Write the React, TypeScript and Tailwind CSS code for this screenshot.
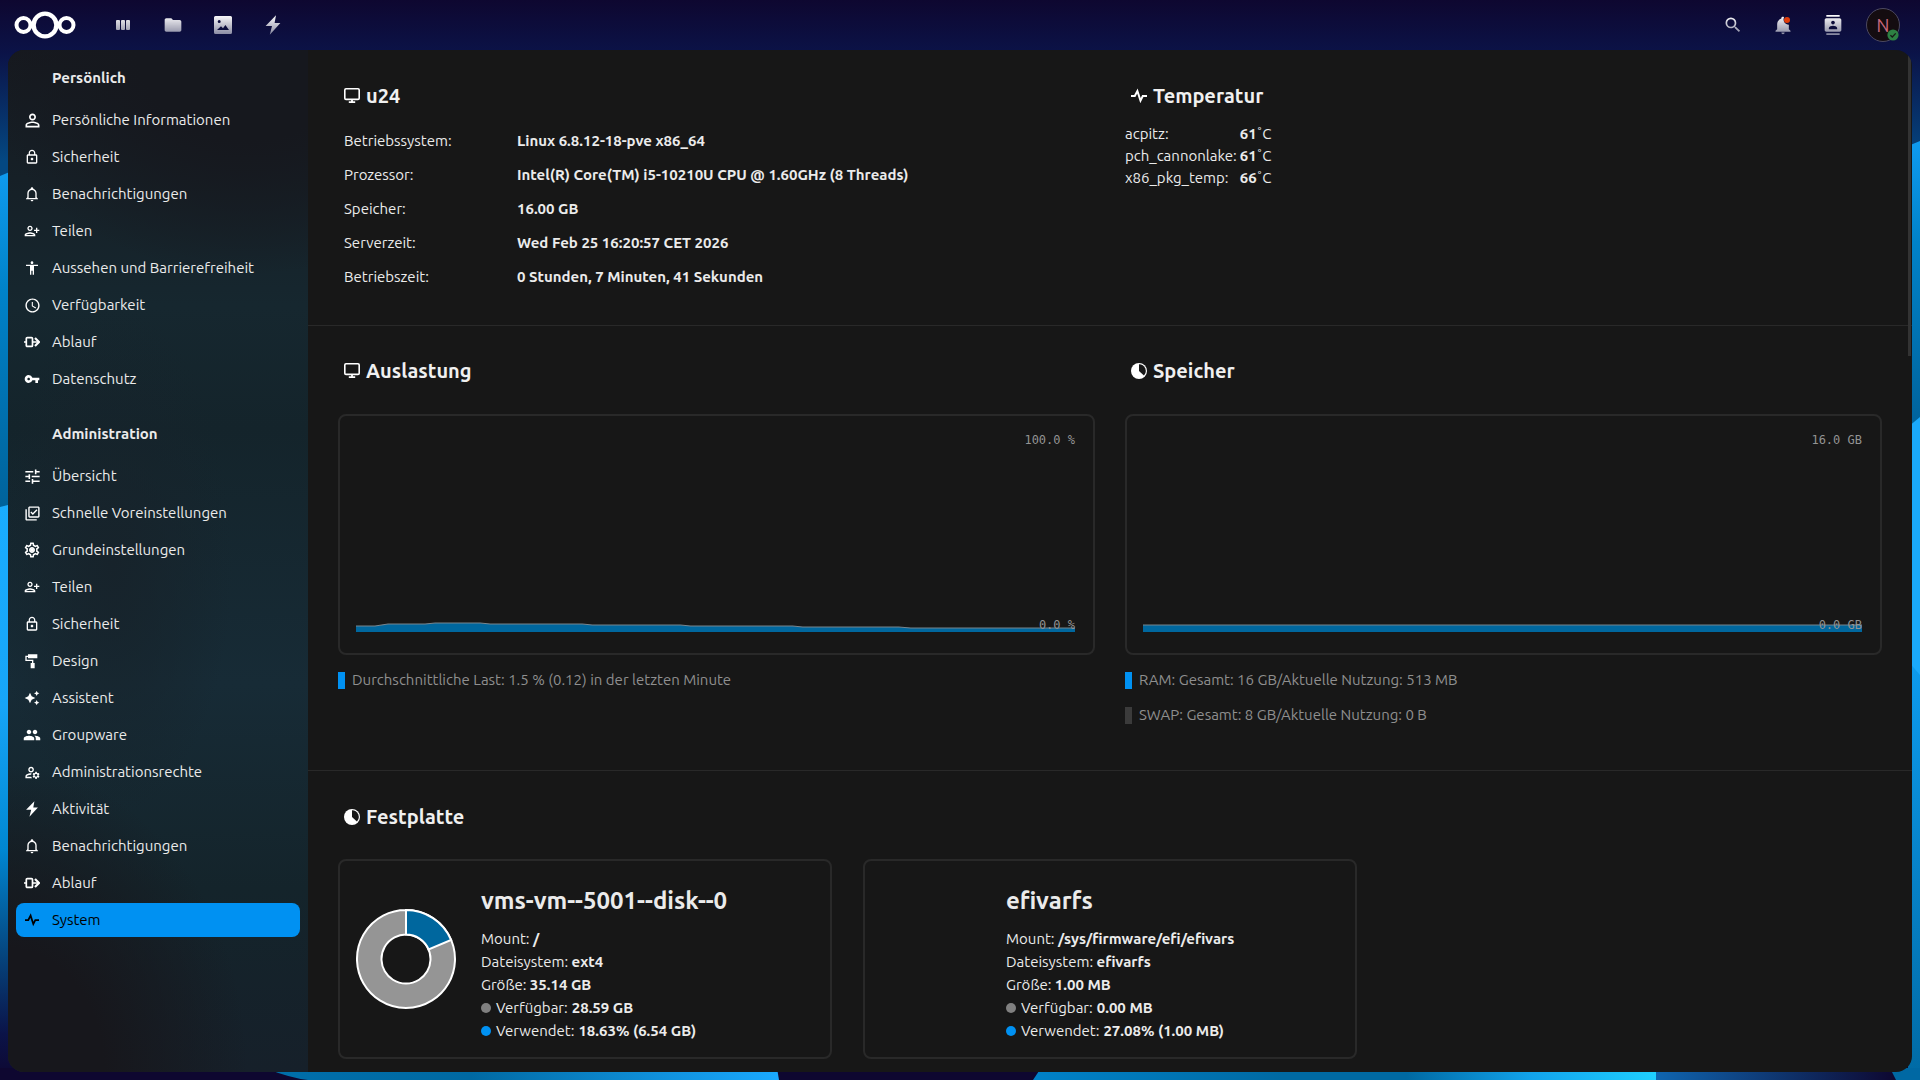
import type { ReactNode } from "react"
import type { IconType } from "react-icons"
import {
    MdAccessibility,
    MdAccessTime,
    MdAutoAwesome,
    MdContacts,
    MdFolder,
    MdImagesearchRoller,
    MdLockOutline,
    MdOutlineLibraryAddCheck,
    MdOutlineManageAccounts,
    MdOutlinePersonAddAlt1,
    MdOutlineSettings,
    MdPeople,
    MdPersonOutline,
    MdSearch,
    MdTune,
    MdVpnKey,
} from "react-icons/md"

type IconProps = { size?: number }

const BellOutline = ({ size = 16 }: IconProps) => (
    <svg width={size} height={size} viewBox="0 0 24 24" fill="currentColor">
        <path d="M10 21H14C14 22.1 13.1 23 12 23S10 22.1 10 21M21 19V20H3V19L5 17V11C5 7.9 7.03 5.17 10 4.29V4C10 2.9 10.9 2 12 2S14 2.9 14 4V4.29C16.97 5.17 19 7.9 19 11V17L21 19M17 11C17 8.24 14.76 6 12 6S7 8.24 7 11V18H17V11Z" />
    </svg>
)

const Flow = ({ size = 16 }: IconProps) => (
    <svg width={size} height={size} viewBox="0 0 16 16" fill="none" stroke="currentColor" strokeWidth="1.7">
        <rect x="2.3" y="3.6" width="6.2" height="8.8" rx="1" />
        <path d="M0 8h2.3M8.5 8h6" />
        <path d="M11 4 15 8 11 12" strokeWidth="2.2" />
    </svg>
)

const Bolt = ({ size = 16 }: IconProps) => (
    <svg width={size} height={size} viewBox="0 0 20 20" fill="currentColor">
        <path d="M13 0.3 2.6 11H9L6.8 19.7 17.4 8H11.6Z" />
    </svg>
)

const Pulse = ({ size = 16 }: IconProps) => (
    <svg width={size} height={size} viewBox="0 0 16 16" fill="none" stroke="currentColor" strokeWidth="2">
        <path d="M0 8h3.8L6.4 3 9.5 12.6 11.8 8H16" />
    </svg>
)

const Cog = ({ size = 16 }: IconProps) => (
    <span className="relative">
        <MdOutlineSettings size={size} />
        <span className="absolute inset-0 m-auto size-1 rounded-full bg-current" />
    </span>
)

const Monitor = () => (
    <svg width="16" height="16" viewBox="0 0 16 16" fill="none" stroke="currentColor">
        <rect x="0.8" y="0.8" width="14.4" height="10.6" rx="1.2" strokeWidth="1.6" />
        <path d="M8 11.4v3M4.8 14.2h6.4" strokeWidth="1.8" />
    </svg>
)

const Disk = () => (
    <svg width="16" height="16" viewBox="0 0 16 16">
        <circle cx="8" cy="8" r="8" fill="currentColor" />
        <path d="M8 1.3A6.7 6.7 0 0 1 12.9 12.6L8 8Z" fill="#171717" />
    </svg>
)

const Logo = () => (
    <svg width="62" height="28" viewBox="0 0 62 28" fill="none" stroke="#fff">
        <circle cx="9.5" cy="14" r="7" strokeWidth="4" />
        <circle cx="31" cy="14" r="11.4" strokeWidth="4.4" />
        <circle cx="52.5" cy="14" r="7" strokeWidth="4" />
    </svg>
)

const Bars = () => (
    <svg width="20" height="20" viewBox="0 0 20 20" fill="currentColor">
        <rect x="3" y="5" width="4" height="10" rx="1" />
        <rect x="8" y="5" width="4" height="10" rx="1" />
        <rect x="13" y="5" width="4" height="10" rx="1" />
    </svg>
)

const Photo = () => (
    <svg width="20" height="20" viewBox="0 0 20 20" fill="currentColor">
        <path
            fillRule="evenodd"
            d="M2.5 1h15A1.5 1.5 0 0 1 19 2.5v15a1.5 1.5 0 0 1-1.5 1.5h-15A1.5 1.5 0 0 1 1 17.5v-15A1.5 1.5 0 0 1 2.5 1ZM6.2 5a1.5 1.5 0 1 0 0 3 1.5 1.5 0 0 0 0-3ZM4 15h12l-3.6-5-2.4 3.2-2-2L4 15Z"
        />
    </svg>
)

const BellUnread = () => (
    <svg width="20" height="20" viewBox="0 0 24 24">
        <path
            fill="currentColor"
            d="M21 19V20H3V19L5 17V11C5 7.9 7.03 5.17 10 4.29V4A2 2 0 0 1 13.3 2.5A6.3 6.3 0 0 0 19 11.6V17L21 19M14 21A2 2 0 0 1 10 21"
        />
    </svg>
)

// blue waves behind the app, visible only around the content panel
const Wallpaper = () => (
    <svg className="absolute inset-0 size-full" viewBox="0 0 1920 1080" preserveAspectRatio="none">
        <defs>
            <linearGradient id="sky" x1="0" y1="0" x2="0" y2="1">
                <stop offset="0" stopColor="#0e0730" />
                <stop offset="0.05" stopColor="#0b1348" />
                <stop offset="0.15" stopColor="#044882" />
                <stop offset="0.8" stopColor="#044882" />
                <stop offset="0.93" stopColor="#0b1348" />
                <stop offset="1" stopColor="#0e0730" />
            </linearGradient>
            <linearGradient id="waveA" x1="0" y1="0" x2="0" y2="1">
                <stop offset="0" stopColor="#0f9bf0" />
                <stop offset="0.35" stopColor="#0082c9" />
                <stop offset="1" stopColor="#00629a" />
            </linearGradient>
            <linearGradient id="waveB" x1="0" y1="0" x2="0" y2="1">
                <stop offset="0" stopColor="#1aadff" />
                <stop offset="0.35" stopColor="#17a5f8" />
                <stop offset="0.6" stopColor="#0087d2" />
                <stop offset="0.78" stopColor="#05467f" />
                <stop offset="0.92" stopColor="#0b1348" />
                <stop offset="1" stopColor="#0e0730" />
            </linearGradient>
            <linearGradient id="waveC" x1="0" y1="0" x2="0" y2="1">
                <stop offset="0" stopColor="#0d9bee" />
                <stop offset="1" stopColor="#006aa4" />
            </linearGradient>
            <linearGradient id="floorA" x1="0" y1="0" x2="1" y2="0">
                <stop offset="0" stopColor="#006fab" />
                <stop offset="0.4" stopColor="#0069a2" />
                <stop offset="1" stopColor="#1aa9ff" />
            </linearGradient>
            <linearGradient id="floorB" x1="0" y1="0" x2="1" y2="0">
                <stop offset="0" stopColor="#0082c9" />
                <stop offset="0.4" stopColor="#0069a2" />
                <stop offset="0.6" stopColor="#0069a2" />
                <stop offset="0.8" stopColor="#12a3ec" />
                <stop offset="1" stopColor="#1fcfff" />
            </linearGradient>
            <linearGradient id="floorC" x1="0" y1="0" x2="1" y2="0">
                <stop offset="0" stopColor="#0f65b0" />
                <stop offset="1" stopColor="#0e0730" />
            </linearGradient>
        </defs>
        <rect width="1920" height="1080" fill="url(#sky)" />
        <path d="M0 176 12 171V510H0Z" fill="url(#waveA)" />
        <path d="M0 507 12 504V1080H0Z" fill="url(#waveB)" />
        <path d="M1908 146 1920 141V430H1908Z" fill="url(#waveA)" />
        <path d="M1908 427 1920 417V680H1908Z" fill="#1aa9fb" />
        <path d="M1908 661 1920 675V1080H1908Z" fill="url(#waveC)" />
        <rect y="1068" width="1920" height="12" fill="#0e0730" />
        <path d="M265 1068H777L779 1080H308Q290 1078 265 1068Z" fill="url(#floorA)" />
        <path d="M1041 1068H1656V1080H1033Z" fill="url(#floorB)" />
        <path d="M1656 1068H1890L1896 1080H1656Z" fill="url(#floorC)" />
        <path d="M1890 1068H1920V1080H1896Z" fill="#0068a3" />
    </svg>
)

type NavEntry = { label: string; icon: IconType | ((props: IconProps) => ReactNode); size: number; active?: boolean }

const personal: NavEntry[] = [
    { label: "Persönliche Informationen", icon: MdPersonOutline, size: 21 },
    { label: "Sicherheit", icon: MdLockOutline, size: 16 },
    { label: "Benachrichtigungen", icon: BellOutline, size: 16 },
    { label: "Teilen", icon: MdOutlinePersonAddAlt1, size: 16 },
    { label: "Aussehen und Barrierefreiheit", icon: MdAccessibility, size: 16 },
    { label: "Verfügbarkeit", icon: MdAccessTime, size: 17 },
    { label: "Ablauf", icon: Flow, size: 16 },
    { label: "Datenschutz", icon: MdVpnKey, size: 16 },
]

const administration: NavEntry[] = [
    { label: "Übersicht", icon: MdTune, size: 19 },
    { label: "Schnelle Voreinstellungen", icon: MdOutlineLibraryAddCheck, size: 17 },
    { label: "Grundeinstellungen", icon: Cog, size: 18 },
    { label: "Teilen", icon: MdOutlinePersonAddAlt1, size: 16 },
    { label: "Sicherheit", icon: MdLockOutline, size: 16 },
    { label: "Design", icon: MdImagesearchRoller, size: 16 },
    { label: "Assistent", icon: MdAutoAwesome, size: 16 },
    { label: "Groupware", icon: MdPeople, size: 18 },
    { label: "Administrationsrechte", icon: MdOutlineManageAccounts, size: 17 },
    { label: "Aktivität", icon: Bolt, size: 16 },
    { label: "Benachrichtigungen", icon: BellOutline, size: 16 },
    { label: "Ablauf", icon: Flow, size: 16 },
    { label: "System", icon: Pulse, size: 14, active: true },
]

const NavSection = ({ title, items }: { title: string; items: NavEntry[] }) => (
    <section>
        <h2 className="h-[34px] pl-9 leading-[34px] font-semibold">{title}</h2>
        <ul className="mt-2 flex flex-col gap-[3px]">
            {items.map(({ label, icon: Icon, size, active }) => (
                <li key={label}>
                    <a
                        href="#"
                        className={
                            active
                                ? "flex h-[34px] items-center gap-1 rounded-lg bg-[#0091f2] text-black"
                                : "flex h-[34px] items-center gap-1 rounded-lg"
                        }
                    >
                        <span className={active ? "flex w-8 justify-center" : "flex w-8 justify-center text-white"}>
                            <Icon size={size} />
                        </span>
                        {label}
                    </a>
                </li>
            ))}
        </ul>
    </section>
)

const HeaderButton = ({ label, children }: { label: string; children: ReactNode }) => (
    <button
        aria-label={label}
        className="flex h-[50px] w-[50px] items-center justify-center text-white [mask-image:linear-gradient(#fff_30%,rgba(255,255,255,0.5)_70%)]"
    >
        {children}
    </button>
)

const TopBar = () => (
    <header className="relative flex h-[50px] shrink-0 items-center justify-between pr-3 pl-[14px]">
        <div className="flex items-center">
            <a href="#" aria-label="Nextcloud">
                <Logo />
            </a>
            <nav className="ml-[22px] flex">
                <HeaderButton label="Dashboard"><Bars /></HeaderButton>
                <HeaderButton label="Dateien"><MdFolder size={20} /></HeaderButton>
                <HeaderButton label="Fotos"><Photo /></HeaderButton>
                <HeaderButton label="Aktivität"><Bolt size={20} /></HeaderButton>
            </nav>
        </div>
        <div className="flex">
            <HeaderButton label="Suche"><MdSearch size={20} /></HeaderButton>
            <div className="relative">
                <HeaderButton label="Benachrichtigungen"><BellUnread /></HeaderButton>
                <span className="absolute top-[17px] left-[26px] size-[6px] rounded-full bg-[#e03c0a]" />
            </div>
            <HeaderButton label="Kontakte"><MdContacts size={20} /></HeaderButton>
            <button aria-label="Konto" className="flex h-[50px] w-[50px] items-center justify-center">
                <span className="relative flex size-[34px] items-center justify-center rounded-full border border-[#4b4860] bg-[#140c10] text-lg text-[#c9687f]">
                    N
                    <svg className="absolute right-0 bottom-0" width="12" height="12" viewBox="0 0 12 12">
                        <circle cx="6" cy="6" r="5.6" fill="#2d8043" />
                        <path d="M3.4 6.2 5.3 8 8.7 4.4" fill="none" stroke="#171717" strokeWidth="1.3" />
                    </svg>
                </span>
            </button>
        </div>
    </header>
)

const SectionTitle = ({ icon, children }: { icon: ReactNode; children: ReactNode }) => (
    <h2 className="flex h-[30px] items-center gap-[6px] pl-[6px] text-xl font-semibold text-[#f0f0f0]">
        <span className="flex w-4 justify-center text-white">{icon}</span>
        {children}
    </h2>
)

const system = [
    ["Betriebssystem:", "Linux 6.8.12-18-pve x86_64"],
    ["Prozessor:", "Intel(R) Core(TM) i5-10210U CPU @ 1.60GHz (8 Threads)"],
    ["Speicher:", "16.00 GB"],
    ["Serverzeit:", "Wed Feb 25 16:20:57 CET 2026"],
    ["Betriebszeit:", "0 Stunden, 7 Minuten, 41 Sekunden"],
]

const temperatures = [
    ["acpitz:", "61"],
    ["pch_cannonlake:", "61"],
    ["x86_pkg_temp:", "66"],
]

// values are [x, y] on a 720x200 canvas
const loadPoints = "0,194 19,194 32,192 69,192 79,191 124,191 134,192 226,192 236,193 324,193 334,194 436,194 446,195 542,195 554,196 718,196"
const memoryPoints = "0,193 718,193"

const Chart = ({ points, max, min }: { points: string; max: string; min: string }) => (
    <div className="relative mt-7 rounded-lg border-2 border-[#292929] px-4 pt-4 pb-[21px]">
        <svg className="block h-[200px] w-full" viewBox="0 0 720 200" preserveAspectRatio="none">
            <polygon points={`0,200 ${points} 718,200`} fill="#00679e" />
            <polyline points={points} fill="none" stroke="#77858e" strokeWidth="1" />
        </svg>
        <span className="absolute top-4 right-[18px] font-['DejaVu_Sans_Mono',monospace] text-xs text-[#939393]">{max}</span>
        <span className="absolute right-[18px] bottom-5 font-['DejaVu_Sans_Mono',monospace] text-xs text-[#939393]">{min}</span>
    </div>
)

const Legend = ({ swap, children }: { swap?: boolean; children: ReactNode }) => (
    <p className="flex h-[35px] items-center gap-[7px] text-[#8f8f8f]">
        <span className={swap ? "h-[17px] w-[7px] bg-[#3b3b3b]" : "h-[17px] w-[7px] bg-[#0091f2]"} />
        {children}
    </p>
)

type DiskInfo = { name: string; mount: string; fs: string; size: string; free: string; used: string; chart?: boolean }

const disks: DiskInfo[] = [
    { name: "vms-vm--5001--disk--0", mount: "/", fs: "ext4", size: "35.14 GB", free: "28.59 GB", used: "18.63% (6.54 GB)", chart: true },
    { name: "efivarfs", mount: "/sys/firmware/efi/efivars", fs: "efivarfs", size: "1.00 MB", free: "0.00 MB", used: "27.08% (1.00 MB)" },
]

const Donut = () => (
    <svg width="100" height="100" viewBox="0 0 100 100" stroke="#fff" strokeWidth="2">
        <path d="M50 1A49 49 0 1 1 49.99 1V25.5A24.5 24.5 0 1 0 50 25.5Z" fill="#959595" fillRule="evenodd" />
        <path d="M50 1A49 49 0 0 1 95.1 30.9L72.6 40.4A24.5 24.5 0 0 0 50 25.5Z" fill="#00679e" />
    </svg>
)

const DiskCard = ({ disk }: { disk: DiskInfo }) => (
    <div className="flex items-center gap-[25px] rounded-lg border-2 border-[#292929] px-4">
        <div className="size-[100px] shrink-0">{disk.chart && <Donut />}</div>
        <div className="pt-[22px] pb-[15px] leading-[23px]">
            <h3 className="mb-2 text-2xl leading-9 font-semibold">{disk.name}</h3>
            <p>Mount: <b className="font-semibold">{disk.mount}</b></p>
            <p>Dateisystem: <b className="font-semibold">{disk.fs}</b></p>
            <p>Größe: <b className="font-semibold">{disk.size}</b></p>
            <p className="flex items-center gap-1">
                <span className="mr-px size-[10px] rounded-full bg-[#808080]" />Verfügbar: <b className="font-semibold">{disk.free}</b>
            </p>
            <p className="flex items-center gap-1">
                <span className="mr-px size-[10px] rounded-full bg-[#0091f2]" />Verwendet: <b className="font-semibold">{disk.used}</b>
            </p>
        </div>
    </div>
)

const App = () => {
    return (
        <div className="relative flex h-screen flex-col overflow-hidden bg-[#0e0730] font-[Ubuntu,'Noto_Sans',sans-serif] text-[15px] text-[#ebebeb]">
            <Wallpaper />
            <TopBar />
            <div className="relative mx-2 mb-2 flex min-h-0 flex-1 overflow-hidden rounded-2xl bg-[#171717]">
                <nav className="flex w-[300px] shrink-0 flex-col gap-[21px] bg-[radial-gradient(ellipse_80%_30%_at_0%_100%,#17171c_40%,transparent),radial-gradient(ellipse_90%_22%_at_80%_0%,#16181e_40%,transparent),radial-gradient(ellipse_40%_25%_at_35%_50%,#17232b,transparent),linear-gradient(#16191f,#16272f_25%,#14242b_37%,#172b36_62%,#14242b_82%,#16202a)] px-2 pt-[11px]">
                    <NavSection title="Persönlich" items={personal} />
                    <NavSection title="Administration" items={administration} />
                </nav>
                <main className="min-w-0 flex-1 overflow-hidden">
                    <section className="grid grid-cols-2 gap-x-[30px] border-b border-[#292929] px-[30px] pt-[31px] pb-[31px]">
                        <div>
                            <SectionTitle icon={<Monitor />}>u24</SectionTitle>
                            <table className="mt-[13px]">
                                <tbody>
                                    {system.map(([label, value]) => (
                                        <tr key={label} className="h-[34px]">
                                            <th scope="row" className="w-[179px] p-0 pl-[6px] text-left font-normal">{label}</th>
                                            <td className="p-0 font-semibold">{value}</td>
                                        </tr>
                                    ))}
                                </tbody>
                            </table>
                        </div>
                        <div>
                            <SectionTitle icon={<Pulse />}>Temperatur</SectionTitle>
                            <table className="mt-3 leading-[22px]">
                                <tbody>
                                    {temperatures.map(([label, value]) => (
                                        <tr key={label}>
                                            <th scope="row" className="p-0 pr-[3px] text-left font-normal">{label}</th>
                                            <td className="p-0"><b className="font-semibold">{value}</b>˚C</td>
                                        </tr>
                                    ))}
                                </tbody>
                            </table>
                        </div>
                    </section>
                    <section className="grid grid-cols-2 gap-x-[30px] border-b border-[#292929] px-[30px] pt-[30px] pb-[37px]">
                        <div>
                            <SectionTitle icon={<Monitor />}>Auslastung</SectionTitle>
                            <Chart points={loadPoints} max="100.0 %" min="0.0 %" />
                            <div className="mt-2">
                                <Legend>Durchschnittliche Last: 1.5 % (0.12) in der letzten Minute</Legend>
                            </div>
                        </div>
                        <div>
                            <SectionTitle icon={<Disk />}>Speicher</SectionTitle>
                            <Chart points={memoryPoints} max="16.0 GB" min="0.0 GB" />
                            <div className="mt-2">
                                <Legend>RAM: Gesamt: 16 GB/Aktuelle Nutzung: 513 MB</Legend>
                                <Legend swap>SWAP: Gesamt: 8 GB/Aktuelle Nutzung: 0 B</Legend>
                            </div>
                        </div>
                    </section>
                    <section className="px-[30px] pt-[31px]">
                        <SectionTitle icon={<Disk />}>Festplatte</SectionTitle>
                        <div className="mt-[27px] grid grid-cols-3 gap-x-[31px]">
                            {disks.map((disk) => (
                                <DiskCard key={disk.name} disk={disk} />
                            ))}
                        </div>
                    </section>
                </main>
                {/* scroll thumb */}
                <div className="absolute top-0 right-px h-[306px] w-[3px] bg-[#333333]" />
            </div>
        </div>
    )
}

export default App
